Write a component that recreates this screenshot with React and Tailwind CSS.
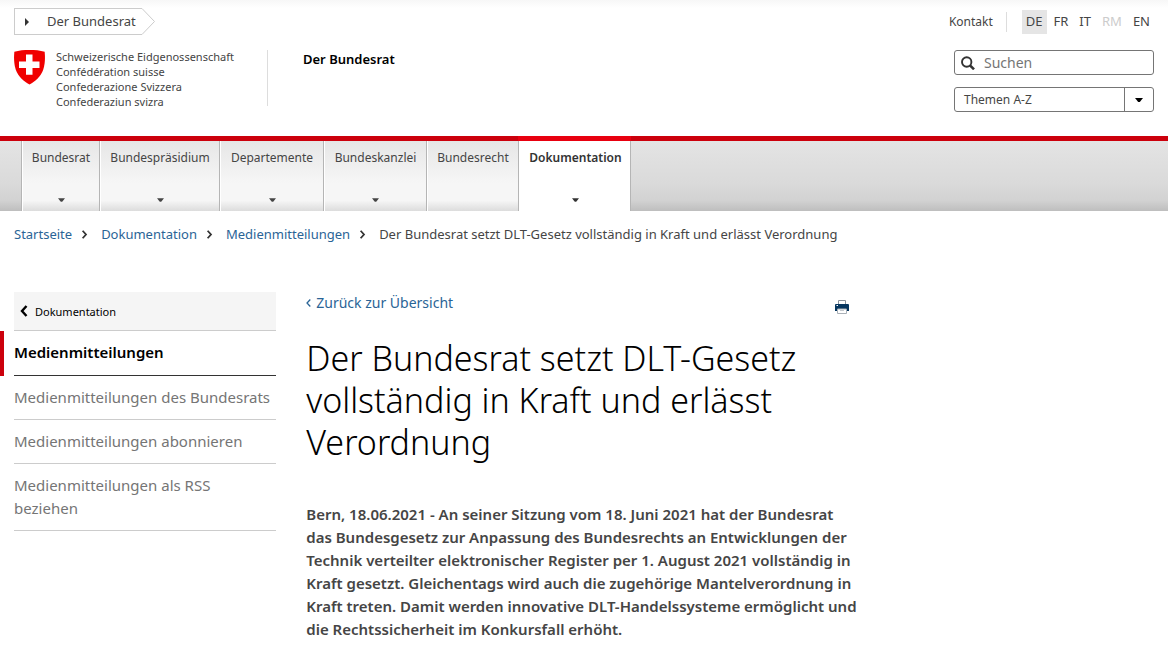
const tabs = [
  { label: "Bundesrat", width: "w-[78px]", menu: true },
  { label: "Bundespräsidium", width: "w-[120px]", menu: true },
  { label: "Departemente", width: "w-[104px]", menu: true },
  { label: "Bundeskanzlei", width: "w-[103px]", menu: true },
  { label: "Bundesrecht", width: "w-[92px]", menu: false },
  { label: "Dokumentation", width: "w-[113px]", menu: true, active: true },
];

const languages = ["DE", "FR", "IT", "RM", "EN"];

const trail = ["Startseite", "Dokumentation", "Medienmitteilungen"];

const subPages = [
  "Medienmitteilungen des Bundesrats",
  "Medienmitteilungen abonnieren",
  "Medienmitteilungen als RSS beziehen",
];

function Caret({ className }) {
  return (
    <svg viewBox="0 0 8 4" className={className} aria-hidden="true">
      <path d="M0 0h8L4.800 4h-1.600z" fill="currentColor" />
    </svg>
  );
}

function Chevron({ className, left = false }) {
  return (
    <svg viewBox="0 0 8 12" className={className} aria-hidden="true">
      <path
        d={left ? "M6.500 1 2 6l4.500 5" : "M1.500 1 6 6l-4.500 5"}
        fill="none"
        stroke="currentColor"
        strokeWidth="2.400"
      />
    </svg>
  );
}

function Shield() {
  return (
    <svg viewBox="0 0 31 35" className="h-[35px] w-[31px] shrink-0" aria-hidden="true">
      <path
        d="M0.300 1.800C5 0.300 10 0 15.500 0s10.500 0.300 15.200 1.800c0.500 6 0.400 12.500-1.500 18C26.700 26.500 21.500 31.500 15.500 34.500 9.500 31.500 4.300 26.500 1.800 19.800-0.100 14.300-0.200 7.800 0.300 1.800z"
        fill="#f00000"
      />
      <path d="M12 4.500h6.500v6.900H25.500v6.500h-7v6.900H12v-6.900H5v-6.500h7z" fill="#fff" />
    </svg>
  );
}

function Printer() {
  return (
    <svg viewBox="0 0 14 14" className="h-[14px] w-[14px]" aria-hidden="true">
      <path d="M3.500 5V0.500h7V5" fill="#fff" stroke="#8a929b" />
      <path d="M1 4h12a1 1 0 0 1 1 1v6H0V5a1 1 0 0 1 1-1z" fill="#06365f" />
      <path d="M2.500 9h9v4.500h-9z" fill="#fff" stroke="#a9b0b7" />
      <path d="M5 10.500h4" stroke="#c5c9ce" />
      <path d="M1.500 5.500h1.500" stroke="#fff" />
    </svg>
  );
}

export default function App() {
  return (
    <div className="min-h-screen bg-white font-['Noto_Sans','Open_Sans',sans-serif] text-[13px] text-[#454545]">
      <header className="flex h-[136px] items-start bg-[linear-gradient(#f7f7f7,#fff_8px)] px-[14px] pt-2">
        <div className="flex w-[254px] shrink-0 flex-col">
          <a href="#bundesrat" className="flex h-[27px] w-[141px]">
            <span className="flex flex-1 items-center border border-r-0 border-[#ccc] bg-white pl-[10px]">
              <svg viewBox="0 0 4 8" className="mr-[18px] h-[8px] w-[4px]" aria-hidden="true">
                <path d="M0 0l4 4-4 4z" fill="#333" />
              </svg>
              Der Bundesrat
            </span>
            <svg viewBox="0 0 13 27" className="h-[27px] w-[13px] shrink-0" aria-hidden="true">
              <path d="M0 0.500 12.500 13.500 0 26.500" fill="none" stroke="#ccc" />
            </svg>
          </a>
          <div className="mt-[15px] flex h-[56px] items-start border-r border-[#ddd]">
            <Shield />
            <p className="-mt-px ml-[11px] text-[11px] leading-[15px] text-[#444]">
              Schweizerische Eidgenossenschaft
              <br />
              Confédération suisse
              <br />
              Confederazione Svizzera
              <br />
              Confederaziun svizra
            </p>
          </div>
        </div>

        <p className="ml-[35px] mt-[42px] flex-1 text-[13px] leading-[18px] font-semibold text-black">
          Der Bundesrat
        </p>

        <div className="flex flex-col items-end">
          <div className="mt-[2px] flex h-6 items-center">
            <a href="#kontakt" className="text-[12px]">
              Kontakt
            </a>
            <span className="ml-[13px] h-5 w-px bg-[#ddd]" />
            <ul className="ml-[15px] flex h-6 gap-[3px]">
              {languages.map((code) => (
                <li key={code}>
                  <a
                    href={"#" + code}
                    className={
                      "flex h-full items-center px-[4px] " +
                      (code === "DE" ? "bg-[#e5e5e5]" : code === "RM" ? "text-[#ccc]" : "")
                    }
                  >
                    {code}
                  </a>
                </li>
              ))}
            </ul>
          </div>
          <div className="mt-4 flex h-[25px] w-[200px] items-center rounded-[3px] border border-[#757575] bg-white">
            <label htmlFor="search" aria-label="Suchen">
              <svg viewBox="0 0 14 14" className="ml-[6px] mr-[9px] h-[14px] w-[14px]" aria-hidden="true">
                <circle cx="5.700" cy="6" r="4.700" fill="none" stroke="#333" strokeWidth="1.900" />
                <path d="M9 9.300l4 4" stroke="#333" strokeWidth="2.600" />
              </svg>
            </label>
            <input
              id="search"
              type="search"
              placeholder="Suchen"
              className="h-full min-w-0 flex-1 bg-transparent text-[14px] outline-none placeholder:text-[#757575]"
            />
          </div>
          <button
            type="button"
            className="mt-3 flex h-[25px] w-[200px] items-center rounded-[3px] border border-[#757575] bg-white text-left text-[12px]"
          >
            <span className="flex-1 pl-[9px]">Themen A-Z</span>
            <span className="flex h-full w-[29px] items-center justify-center border-l border-[#757575] text-black">
              <Caret className="h-[4px] w-[8px]" />
            </span>
          </button>
        </div>
      </header>

      <nav className="flex h-[75px] border-t-[5px] border-[#cc000c] bg-[linear-gradient(#e4e4e4,#dadada_60%,#d2d2d2_85%,#bebebe)] pl-[21px]">
        <ul className="-mt-[5px] flex">
          {tabs.map((tab) => (
            <li key={tab.label} className={tab.width}>
              <a
                href={"#" + tab.label}
                className={
                  "flex h-full flex-col items-center border-t-[5px] pt-[8px] pl-[2px] leading-[18px] " +
                  (tab.active
                    ? "border-[#e8000f] bg-white font-semibold text-[#333] shadow-[inset_1px_0_#b5b5b5,inset_-1px_0_#b5b5b5]"
                    : "border-[#cc000c] bg-[linear-gradient(#e6e6e6,#f6f6f6_60%,#f6f6f6_85%,#dcdcdc)] shadow-[inset_1px_0_#b5b5b5,inset_2px_0_#fff]")
                }
              >
                <span className="text-[12px]">{tab.label}</span>
                {tab.menu && <Caret className="mt-[31px] h-[4px] w-[7px]" />}
              </a>
            </li>
          ))}
        </ul>
      </nav>

      <nav aria-label="Breadcrumb" className="mt-[13px] px-[14px]">
        <ol className="flex items-center leading-5">
          {trail.map((page) => (
            <li key={page} className="flex items-center">
              <a href={"#" + page} className="text-[#2a6496]">
                {page}
              </a>
              <Chevron className="mr-[13px] ml-[9px] h-[9px] w-[7px] text-[#333]" />
            </li>
          ))}
          <li>Der Bundesrat setzt DLT-Gesetz vollständig in Kraft und erlässt Verordnung</li>
        </ol>
      </nav>

      <div className="mt-[48px] grid grid-cols-4 gap-[30px] pr-[15px] pl-[14px]">
        <aside className="text-[15px] leading-[23px] text-[#757575]">
          <a
            href="#zurueck"
            className="flex h-[39px] items-center border-b border-[#ccc] bg-[#f5f5f5] pl-[6px] text-[11px] text-black"
          >
            <Chevron left className="mr-[7px] h-[12px] w-[8px]" />
            Dokumentation
          </a>
          <div className="-ml-[14px] border-l-4 border-[#cc000c] pl-[10px]">
            <a
              href="#medienmitteilungen"
              className="block border-b border-[#333] pt-[10px] pb-[11px] font-semibold text-black"
            >
              Medienmitteilungen
            </a>
          </div>
          <ul>
            {subPages.map((page) => (
              <li key={page} className="border-b border-[#ccc] pt-[10px] pb-[10px]">
                <a href="#seite">{page}</a>
              </li>
            ))}
          </ul>
        </aside>

        <main className="col-span-2">
          <div className="flex items-start justify-between pt-px pr-[12px]">
            <a
              href="#uebersicht"
              className="flex items-center text-[14px] leading-5 text-[#2a6496]"
            >
              <svg viewBox="0 0 5 8" className="mr-[5px] h-[8px] w-[5px]" aria-hidden="true">
                <path d="M4.300 0.500 1 4l3.300 3.500" fill="none" stroke="currentColor" strokeWidth="1.300" />
              </svg>
              Zurück zur Übersicht
            </a>
            <button type="button" aria-label="Drucken" className="mt-[7px]">
              <Printer />
            </button>
          </div>
          <h1 className="mt-[23px] text-[34px] leading-[42px] font-light text-black">
            Der Bundesrat setzt DLT-Gesetz vollständig in Kraft und erlässt Verordnung
          </h1>
          <p className="mt-[40px] text-[15px] leading-[23px] font-semibold">
            Bern, 18.06.2021 - An seiner Sitzung vom 18. Juni 2021 hat der Bundesrat das Bundesgesetz
            zur Anpassung des Bundesrechts an Entwicklungen der Technik verteilter elektronischer
            Register per 1. August 2021 vollständig in Kraft gesetzt. Gleichentags wird auch die
            zugehörige Mantelverordnung in Kraft treten. Damit werden innovative DLT-Handelssysteme
            ermöglicht und die Rechtssicherheit im Konkursfall erhöht.
          </p>
        </main>
      </div>
    </div>
  );
}
